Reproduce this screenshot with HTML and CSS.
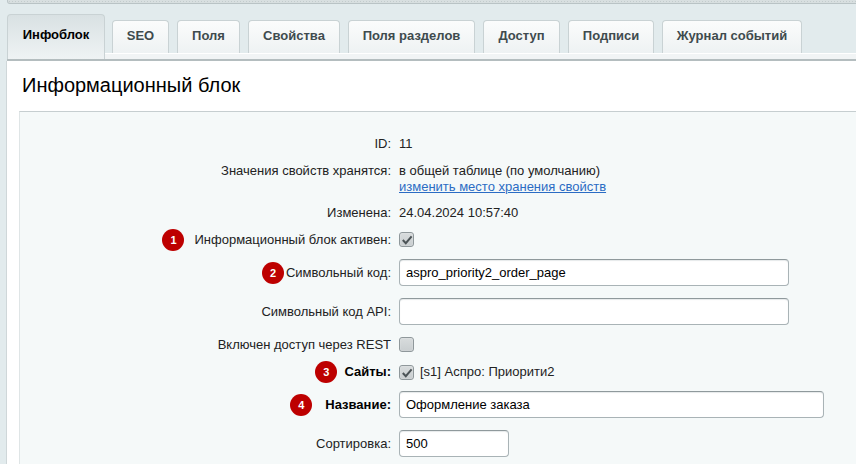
FILE: index.html
```html
<!DOCTYPE html>
<html lang="ru">
<head>
<meta charset="utf-8">
<title>Информационный блок</title>
<link rel="stylesheet" href="styles.css">
</head>
<body>
<div class="topstrip"></div>
<nav class="tabs">
  <a class="tab active">Инфоблок</a>
  <a class="tab t-seo">SEO</a>
  <a class="tab t-fields">Поля</a>
  <a class="tab t-props">Свойства</a>
  <a class="tab t-sect">Поля разделов</a>
  <a class="tab t-access">Доступ</a>
  <a class="tab t-sign">Подписи</a>
  <a class="tab t-log">Журнал событий</a>
</nav>
<div class="band"></div>
<main class="page">
  <h1 class="title">Информационный блок</h1>
  <section class="panel">
    <div class="row r-id"><div class="label">ID:</div><div class="value">11</div></div>
    <div class="row r-store"><div class="label">Значения свойств хранятся:</div><div class="value">в общей таблице (по умолчанию)<br><a class="link">изменить место хранения свойств</a></div></div>
    <div class="row r-date"><div class="label">Изменена:</div><div class="value">24.04.2024 10:57:40</div></div>
    <div class="row r-active"><div class="label"><span class="badge b1">1</span>Информационный блок активен:</div><div class="value"><span class="check"><svg viewBox="0 0 16 16" width="16" height="16"><path d="M3.8 8l3 3.2L12.6 4.4" fill="none" stroke="#4c5457" stroke-width="2"/></svg></span></div></div>
    <div class="row r-code"><div class="label"><span class="badge b2">2</span>Символьный код:</div><div class="value"><div class="input w-long">aspro_priority2_order_page</div></div></div>
    <div class="row r-api"><div class="label">Символьный код API:</div><div class="value"><div class="input w-long"></div></div></div>
    <div class="row r-rest"><div class="label">Включен доступ через REST</div><div class="value"><span class="check"></span></div></div>
    <div class="row r-sites"><div class="label strong"><span class="badge b3">3</span>Сайты:</div><div class="value site"><span class="check"><svg viewBox="0 0 16 16" width="16" height="16"><path d="M3.8 8l3 3.2L12.6 4.4" fill="none" stroke="#4c5457" stroke-width="2"/></svg></span>[s1] Аспро: Приорити2</div></div>
    <div class="row r-name"><div class="label strong"><span class="badge b4">4</span>Название:</div><div class="value"><div class="input w-name">Оформление заказа</div></div></div>
    <div class="row r-sort"><div class="label">Сортировка:</div><div class="value"><div class="input w-short">500</div></div></div>
  </section>
</main>
</body>
</html>
```
FILE: styles.css
```css
* { box-sizing: border-box; }
html, body { margin: 0; padding: 0; }
body {
  width: 856px;
  height: 464px;
  overflow: hidden;
  background: #e2ebed;
  font-family: "Liberation Sans", Arial, sans-serif;
  font-size: 13px;
  color: #000;
}
.topstrip {
  height: 4px;
  margin-left: 7px;
  background-color: #d8dfe0;
  background-image: radial-gradient(circle, #c3cccd 1px, transparent 1px);
  background-size: 3px 3px;
  border-left: 1px solid #bcc6c8;
  border-bottom: 1px solid #b9c3c5;
  border-bottom-left-radius: 3px;
}
.tabs {
  display: flex;
  align-items: flex-end;
  height: 49px;
  padding-left: 7px;
}
.tab {
  display: flex;
  align-items: center;
  justify-content: center;
  height: 33px;
  margin-right: 8px;
  padding-bottom: 4px;
  border: 1px solid #c9d2d4;
  border-bottom: 0;
  border-radius: 4px 4px 0 0;
  background: linear-gradient(#fbfcfc, #eef2f3);
  font-weight: bold;
  font-size: 13px;
  color: #3f4b4e;
}
.tab.active {
  position: relative;
  z-index: 1;
  width: 98px;
  height: 45px;
  margin-right: 7px;
  margin-bottom: -6px;
  padding-bottom: 6px;
  background: linear-gradient(#d9e1e3, #eff3f4);
  color: #000;
}
.t-seo { width: 57px; }
.t-fields { width: 63px; }
.t-props { width: 92px; }
.t-sect { width: 127px; }
.t-access { width: 77px; }
.t-sign { width: 86px; }
.t-log { width: 140px; }
.band {
  height: 8px;
  margin-left: 7px;
  background: #f1f4f5;
  border-bottom: 2px solid #b4bdbf;
  border-top: 1px solid #fff;
}
.page {
  margin-left: 6px;
  height: 403px;
  background: #fff;
  border-left: 1px solid #cfd7d9;
  padding-left: 12px;
}
.title {
  margin: 0;
  height: 50px;
  padding: 13px 0 0 3px;
  font-size: 20px;
  line-height: 23px;
  font-weight: normal;
  color: #000;
}
.panel {
  height: 353px;
  padding-top: 24px;
  background: #f5f9f9;
  border-top: 1px solid #c6ced0;
  border-left: 1px solid #dfe5e6;
  font-size: 13px;
}
.row {
  display: flex;
  column-gap: 8px;
  line-height: 16px;
}
.label {
  width: 371px;
  display: flex;
  justify-content: flex-end;
  align-items: center;
  flex: none;
  color: #222;
}
.r-store .label { align-items: flex-start; }
.strong { font-weight: bold; color: #000; }
.value { display: flex; flex-direction: column; align-items: flex-start; color: #222; }
.site { flex-direction: row; align-items: center; }
.link { color: #2b6cc4; text-decoration: underline; }
.r-store { margin-top: 11px; }
.r-date { margin-top: 10px; }
.r-active { margin-top: 11px; }
.r-code { margin-top: 11px; }
.r-api { margin-top: 12px; }
.r-rest { margin-top: 12px; }
.r-sites { margin-top: 11px; }
.r-name { margin-top: 11px; }
.r-sort { margin-top: 12px; }
.input {
  height: 27px;
  padding: 0 6px;
  display: flex;
  align-items: center;
  background: #fff;
  border: 1px solid #a9b3b6;
  border-top-color: #8f999c;
  border-radius: 4px;
  box-shadow: inset 0 1px 1px #e6e9ea;
  font-size: 13px;
  color: #000;
}
.w-long { width: 390px; }
.w-name { width: 425px; }
.w-short { width: 110px; }
.check {
  display: block;
  flex: none;
  width: 15px;
  height: 15px;
  border: 1px solid #8f989b;
  border-radius: 3px;
  background: linear-gradient(#d8dcdd, #c9ced0);
  box-shadow: inset 0 0 1px #fff;
  margin: 0 6px 0 0;
}
.check svg { display: block; margin: -1px 0 0 -1px; }
.badge {
  display: flex;
  flex: none;
  align-items: center;
  justify-content: center;
  width: 22px;
  height: 22px;
  margin-top: -3px;
  margin-bottom: -3px;
  border-radius: 50%;
  background: #bd0000;
  color: #fff;
  font-size: 11px;
  font-weight: bold;
}
.b1 { margin-right: 10px; }
.b2 { margin-right: 2px; }
.b3 { margin-right: 7px; }
.b4 { margin-right: 13px; }
```
